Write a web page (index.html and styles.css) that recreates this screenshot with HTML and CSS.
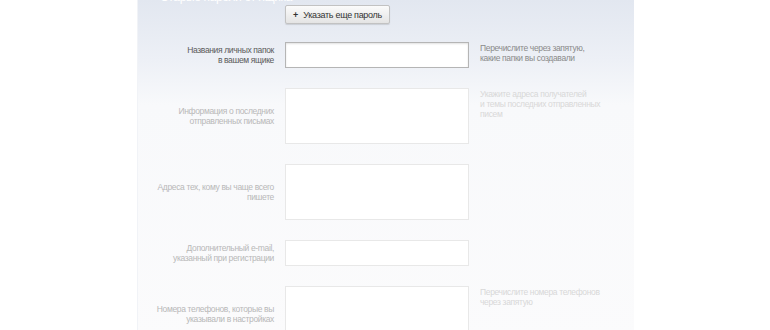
FILE: index.html
```html
<!DOCTYPE html>
<html lang="ru">

<head>
    <meta charset="UTF-8">
    <meta name="viewport" content="width=device-width, initial-scale=1.0">
    <title>Восстановление доступа</title>
    <link rel="stylesheet" href="styles.css">
</head>

<body>
    <div class="panel">
        <div class="row top-row">
            <h2 class="panel-title">Старые пароли от ящика</h2>
            <div class="field">
                <button class="add-btn"><span class="plus">+</span> Указать еще пароль</button>
            </div>
        </div>

        <div class="row row-active">
            <label class="label">Названия личных папок<br>в вашем ящике</label>
            <div class="field"><input class="input" type="text"></div>
            <p class="hint">Перечислите через запятую,<br>какие папки вы создавали</p>
        </div>

        <div class="row">
            <label class="label">Информация о последних<br>отправленных письмах</label>
            <div class="field"><textarea class="area"></textarea></div>
            <p class="hint">Укажите адреса получателей<br>и темы последних отправленных<br>писем</p>
        </div>

        <div class="row">
            <label class="label">Адреса тех, кому вы чаще всего<br>пишете</label>
            <div class="field"><textarea class="area"></textarea></div>
            <p class="hint"></p>
        </div>

        <div class="row">
            <label class="label">Дополнительный e-mail,<br>указанный при регистрации</label>
            <div class="field"><input class="input" type="text"></div>
            <p class="hint"></p>
        </div>

        <div class="row">
            <label class="label">Номера телефонов, которые вы<br>указывали в настройках</label>
            <div class="field"><textarea class="area"></textarea></div>
            <p class="hint">Перечислите номера телефонов<br>через запятую</p>
        </div>
    </div>
</body>

</html>
```

FILE: styles.css
```css
* {
    padding: 0;
    margin: 0;
    box-sizing: border-box;
}

html,
body {
    height: 100%;
    overflow: hidden;
}

body {
    background-color: #fff;
    font-family: "Liberation Sans", Arial, sans-serif;
    font-size: 8.5px;
    letter-spacing: -0.35px;
    line-height: 10px;
}

.panel {
    margin-left: 137px;
    width: 497px;
    min-height: 100%;
    background: linear-gradient(#e2e7f0 0, #edf0f6 60px, #f8f9fb 105px, #fbfbfc 100%);
    border-left: 1px solid #f1f3f7;
}

.row {
    display: grid;
    grid-template-columns: 136px 184px 154px;
    column-gap: 11px;
    margin-bottom: 20px;
}

.label {
    align-self: center;
    text-align: right;
    white-space: nowrap;
    color: #b8b8b8;
}

.hint {
    padding-top: 1px;
    white-space: nowrap;
    color: #d8d8d8;
}

.top-row {
    height: 24px;
    margin-bottom: 18px;
}

.panel-title {
    margin-top: -10px;
    padding-left: 22px;
    font-size: 12px;
    line-height: 14px;
    font-weight: normal;
    white-space: nowrap;
    color: #fff;
}

.add-btn {
    margin-top: 5px;
    height: 19px;
    width: 105px;
    font-family: inherit;
    font-size: 9px;
    letter-spacing: -0.3px;
    white-space: nowrap;
    color: #333;
    background: linear-gradient(#fbfbfb, #e4e4e4);
    border: 1px solid #c2c2c2;
    border-radius: 2px;
    box-shadow: 0 1px 1px rgba(0, 0, 0, 0.12);
}

.plus {
    font-weight: bold;
    margin-right: 3px;
}

.input,
.area {
    display: block;
    width: 184px;
    background: #fff;
    border: 1px solid #e8e8e8;
    resize: none;
}

.input {
    height: 26px;
}

.area {
    height: 56px;
}

.row-active .label {
    color: #5a5a5a;
}

.row-active .hint {
    color: #8a8a8a;
}

.row-active .input {
    border-color: #b5b5b5;
    box-shadow: inset 0 1px 2px rgba(0, 0, 0, 0.12);
}
```
